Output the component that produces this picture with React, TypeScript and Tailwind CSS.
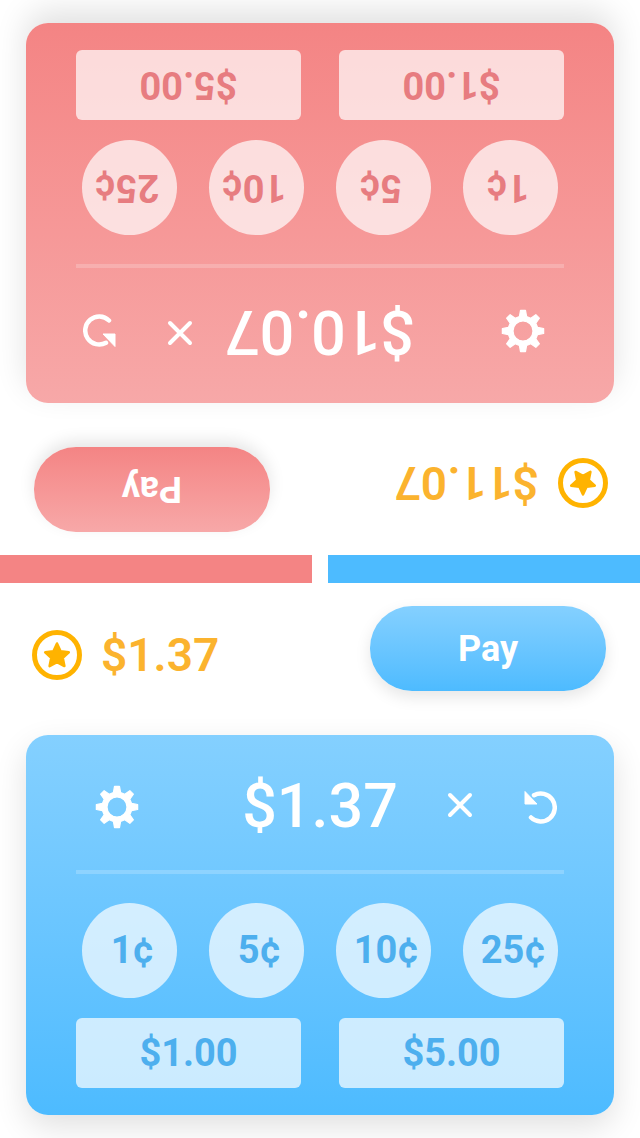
import React from "react";

interface HalfProps {
  amount: string;
  balance: string;
  flipped?: boolean;
}

// 8 teeth around a ring, even-odd hole in the middle
const gearPath = () => {
  const pt = (r: number, a: number) =>
    `${(22 + r * Math.cos(a)).toFixed(2)} ${(22 + r * Math.sin(a)).toFixed(2)}`;
  const parts: string[] = [];
  for (let i = 0; i < 8; i++) {
    const a = (i * Math.PI) / 4 - Math.PI / 2;
    parts.push(
      `${i === 0 ? "M" : "L"}${pt(15, a - 0.24)}`,
      `L${pt(20.8, a - 0.12)}`,
      `L${pt(20.8, a + 0.12)}`,
      `L${pt(15, a + 0.24)}`,
    );
  }
  return `${parts.join(" ")} Z M22 12a10 10 0 1 0 0 20a10 10 0 1 0 0-20z`;
};

const GearIcon = () => (
  <svg width="44" height="44" viewBox="0 0 44 44" className="shrink-0">
    <path
      d={gearPath()}
      fill="#fff"
      fillRule="evenodd"
      stroke="#fff"
      strokeWidth="1.2"
      strokeLinejoin="round"
    />
  </svg>
);

const StarCoin = () => (
  <svg width="50" height="50" viewBox="0 0 50 50" className="shrink-0">
    <circle cx="25" cy="25" r="22.5" fill="none" stroke="#ffb300" strokeWidth="5" />
    <path
      d="M25 13.5l3.6 7.7 8.2 1.1-6 5.6 1.6 8.2-7.4-4-7.4 4 1.6-8.2-6-5.6 8.2-1.1z"
      fill="#ffb300"
      stroke="#ffb300"
      strokeWidth="2.5"
      strokeLinejoin="round"
    />
  </svg>
);

const CloseIcon = () => (
  <svg width="26" height="26" viewBox="0 0 26 26" className="shrink-0 -mt-[3px]">
    <path d="M3 3l20 20M23 3L3 23" stroke="#fff" strokeWidth="4" strokeLinecap="round" />
  </svg>
);

const UndoIcon = () => (
  <svg width="34" height="34" viewBox="0 0 34 34" className="shrink-0">
    <path
      d="M11 5.2A14 14 0 1 1 8 27.5"
      fill="none"
      stroke="#fff"
      strokeWidth="4.5"
      strokeLinecap="round"
    />
    <path d="M2 14V1.5l12 12.5z" fill="#fff" stroke="#fff" strokeWidth="1" strokeLinejoin="round" />
  </svg>
);

const Half: React.FC<HalfProps> = ({ amount, balance, flipped }) => {
  const panel = flipped
    ? "bg-gradient-to-b from-[#f7a8a8] to-[#f48484]"
    : "bg-gradient-to-b from-[#84d0ff] to-[#4dbbff]";
  const ink = flipped ? "text-[#e77c80]" : "text-[#4dafee]";

  return (
    <div className={`h-[555px] flex flex-col ${flipped ? "rotate-180" : ""}`}>
      {/* Balance and pay */}
      <div className="flex items-center justify-between pt-[23px] pl-[32px] pr-[34px]">
        <div className="flex items-center gap-[19px] mt-[12px]">
          <StarCoin />
          <span className="text-[46px] leading-none font-semibold text-[#fbb32e]">{balance}</span>
        </div>
        <button
          className={`w-[236px] h-[85px] rounded-[42px] text-[36px] font-bold text-white shadow-[0_6px_16px_rgba(0,0,0,0.1)] ${panel}`}
        >
          Pay
        </button>
      </div>

      {/* Panel */}
      <div
        className={`mt-[44px] mx-[26px] h-[380px] rounded-[22px] px-[50px] shadow-[0_12px_32px_rgba(0,0,0,0.12)] ${panel}`}
      >
        <div className="h-[135px] pt-[8px] flex items-center text-white">
          <div className="flex-1">
            <div className="ml-[19px] w-[44px]">
              <GearIcon />
            </div>
          </div>
          <span className="text-[61px] leading-none font-medium">{amount}</span>
          <div className="flex-1 flex justify-end">
            <div className="flex items-center gap-[50px] mr-[7px]">
              <CloseIcon />
              <UndoIcon />
            </div>
          </div>
        </div>

        <div className="h-[4px] bg-white/20" />

        <div className="flex justify-between px-[6px] mt-[29px]">
          {["1¢", "5¢", "10¢", "25¢"].map((coin) => (
            <button
              key={coin}
              className={`w-[95px] h-[95px] pl-[6px] rounded-full bg-white/70 text-[38px] font-bold ${ink}`}
            >
              {coin}
            </button>
          ))}
        </div>

        <div className="flex gap-[38px] mt-[20px]">
          {["$1.00", "$5.00"].map((bill) => (
            <button
              key={bill}
              className={`flex-1 h-[70px] pt-[1px] rounded-[6px] bg-white/70 text-[38px] font-bold ${ink}`}
            >
              {bill}
            </button>
          ))}
        </div>
      </div>
    </div>
  );
};

export default function App() {
  return (
    <div className="w-[640px] h-[1138px] bg-white overflow-hidden font-['Roboto',sans-serif]">
      <Half flipped amount="$10.07" balance="$11.07" />

      {/* Turn bars */}
      <div className="flex gap-[16px] h-[28px]">
        <div className="flex-1 bg-[#f48484]" />
        <div className="flex-1 bg-[#4dbbff]" />
      </div>

      <Half amount="$1.37" balance="$1.37" />
    </div>
  );
}
